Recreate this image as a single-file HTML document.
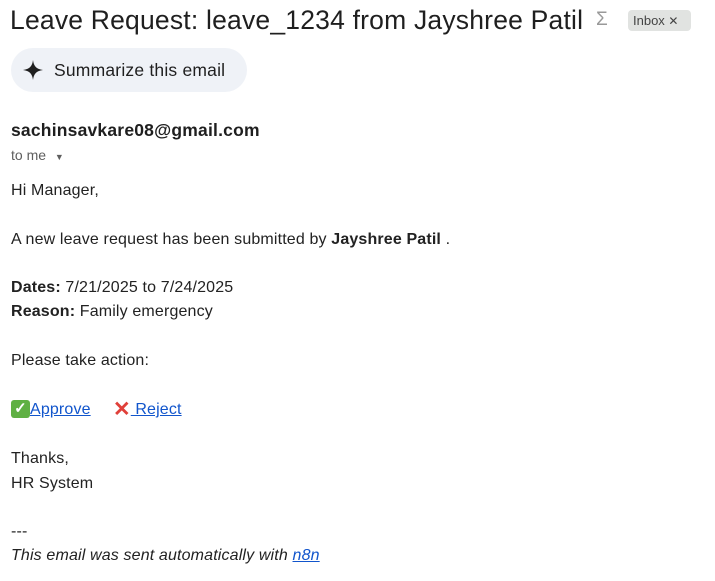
<!DOCTYPE html>
<html><head><meta charset="utf-8"><style>
*{margin:0;padding:0;box-sizing:border-box}
body{width:715px;height:581px;background:#fff;font-family:"Liberation Sans",Arial,sans-serif;color:#222;position:relative;overflow:hidden}
.a{position:absolute;white-space:nowrap}
.t{font-size:16px;line-height:20px;letter-spacing:0.15px}
a{color:#1155cc;text-decoration:underline}
</style></head><body>
<div class="a" style="left:10px;top:3px;font-size:26.5px;line-height:34px;color:#1f1f1f;letter-spacing:0.2px">Leave Request: leave_1234 from Jayshree Patil</div>
<div class="a" style="left:596px;top:9px;font-size:19px;color:#999">Σ</div>
<div class="a" style="left:628px;top:10px;width:63px;height:21px;background:#e1e3e1;border-radius:4px;font-size:13px;line-height:21px;color:#444;padding-left:5px">Inbox <span style="font-size:12px">✕</span></div>
<div class="a" style="left:11px;top:48px;width:236px;height:44px;background:#eff2f7;border-radius:22px"></div>
<svg class="a" style="left:22px;top:59px" width="22" height="22" viewBox="0 0 22 22"><path d="M11 1 C11.8 7 14 10 21 11 C14 12 11.8 15 11 21 C10.2 15 8 12 1 11 C8 10 10.2 7 11 1Z" fill="#1f1f1f"/></svg>
<div class="a" style="left:54px;top:59px;font-size:17.5px;line-height:22px;color:#1f1f1f;letter-spacing:0.2px">Summarize this email</div>
<div class="a" style="left:11px;top:120px;font-size:17.5px;line-height:20px;font-weight:bold;color:#1f1f1f;letter-spacing:0.2px">sachinsavkare08@gmail.com</div>
<div class="a" style="left:11px;top:146px;font-size:14px;line-height:18px;color:#5e5e5e">to me <span style="font-size:9px;margin-left:5px">▼</span></div>
<div class="a t" style="left:11px;top:181px">Hi Manager,</div>
<div class="a t" style="left:11px;top:230px">A new leave request has been submitted by <b>Jayshree Patil</b> .</div>
<div class="a t" style="left:11px;top:278px"><b>Dates:</b> 7/21/2025 to 7/24/2025</div>
<div class="a t" style="left:11px;top:302px"><b>Reason:</b> Family emergency</div>
<div class="a t" style="left:11px;top:351px">Please take action:</div>
<div class="a t" style="left:11px;top:400px"><span style="display:inline-block;width:19px;height:18px;background:#5fb043;border-radius:3px;color:#fff;font-size:15px;line-height:18px;text-align:center;vertical-align:top;font-weight:bold">✓</span><a>Approve</a></div>
<div class="a t" style="left:113px;top:400px"><span style="display:inline-block;color:#e0403a;font-weight:bold;font-size:21px;line-height:20px;vertical-align:top">✕</span><a>&nbsp;Reject</a></div>
<div class="a t" style="left:11px;top:449px">Thanks,</div>
<div class="a t" style="left:11px;top:474px">HR System</div>
<div class="a t" style="left:11px;top:522px">---</div>
<div class="a t" style="left:11px;top:546px;font-style:italic">This email was sent automatically with <a>n8n</a></div>
</body></html>
